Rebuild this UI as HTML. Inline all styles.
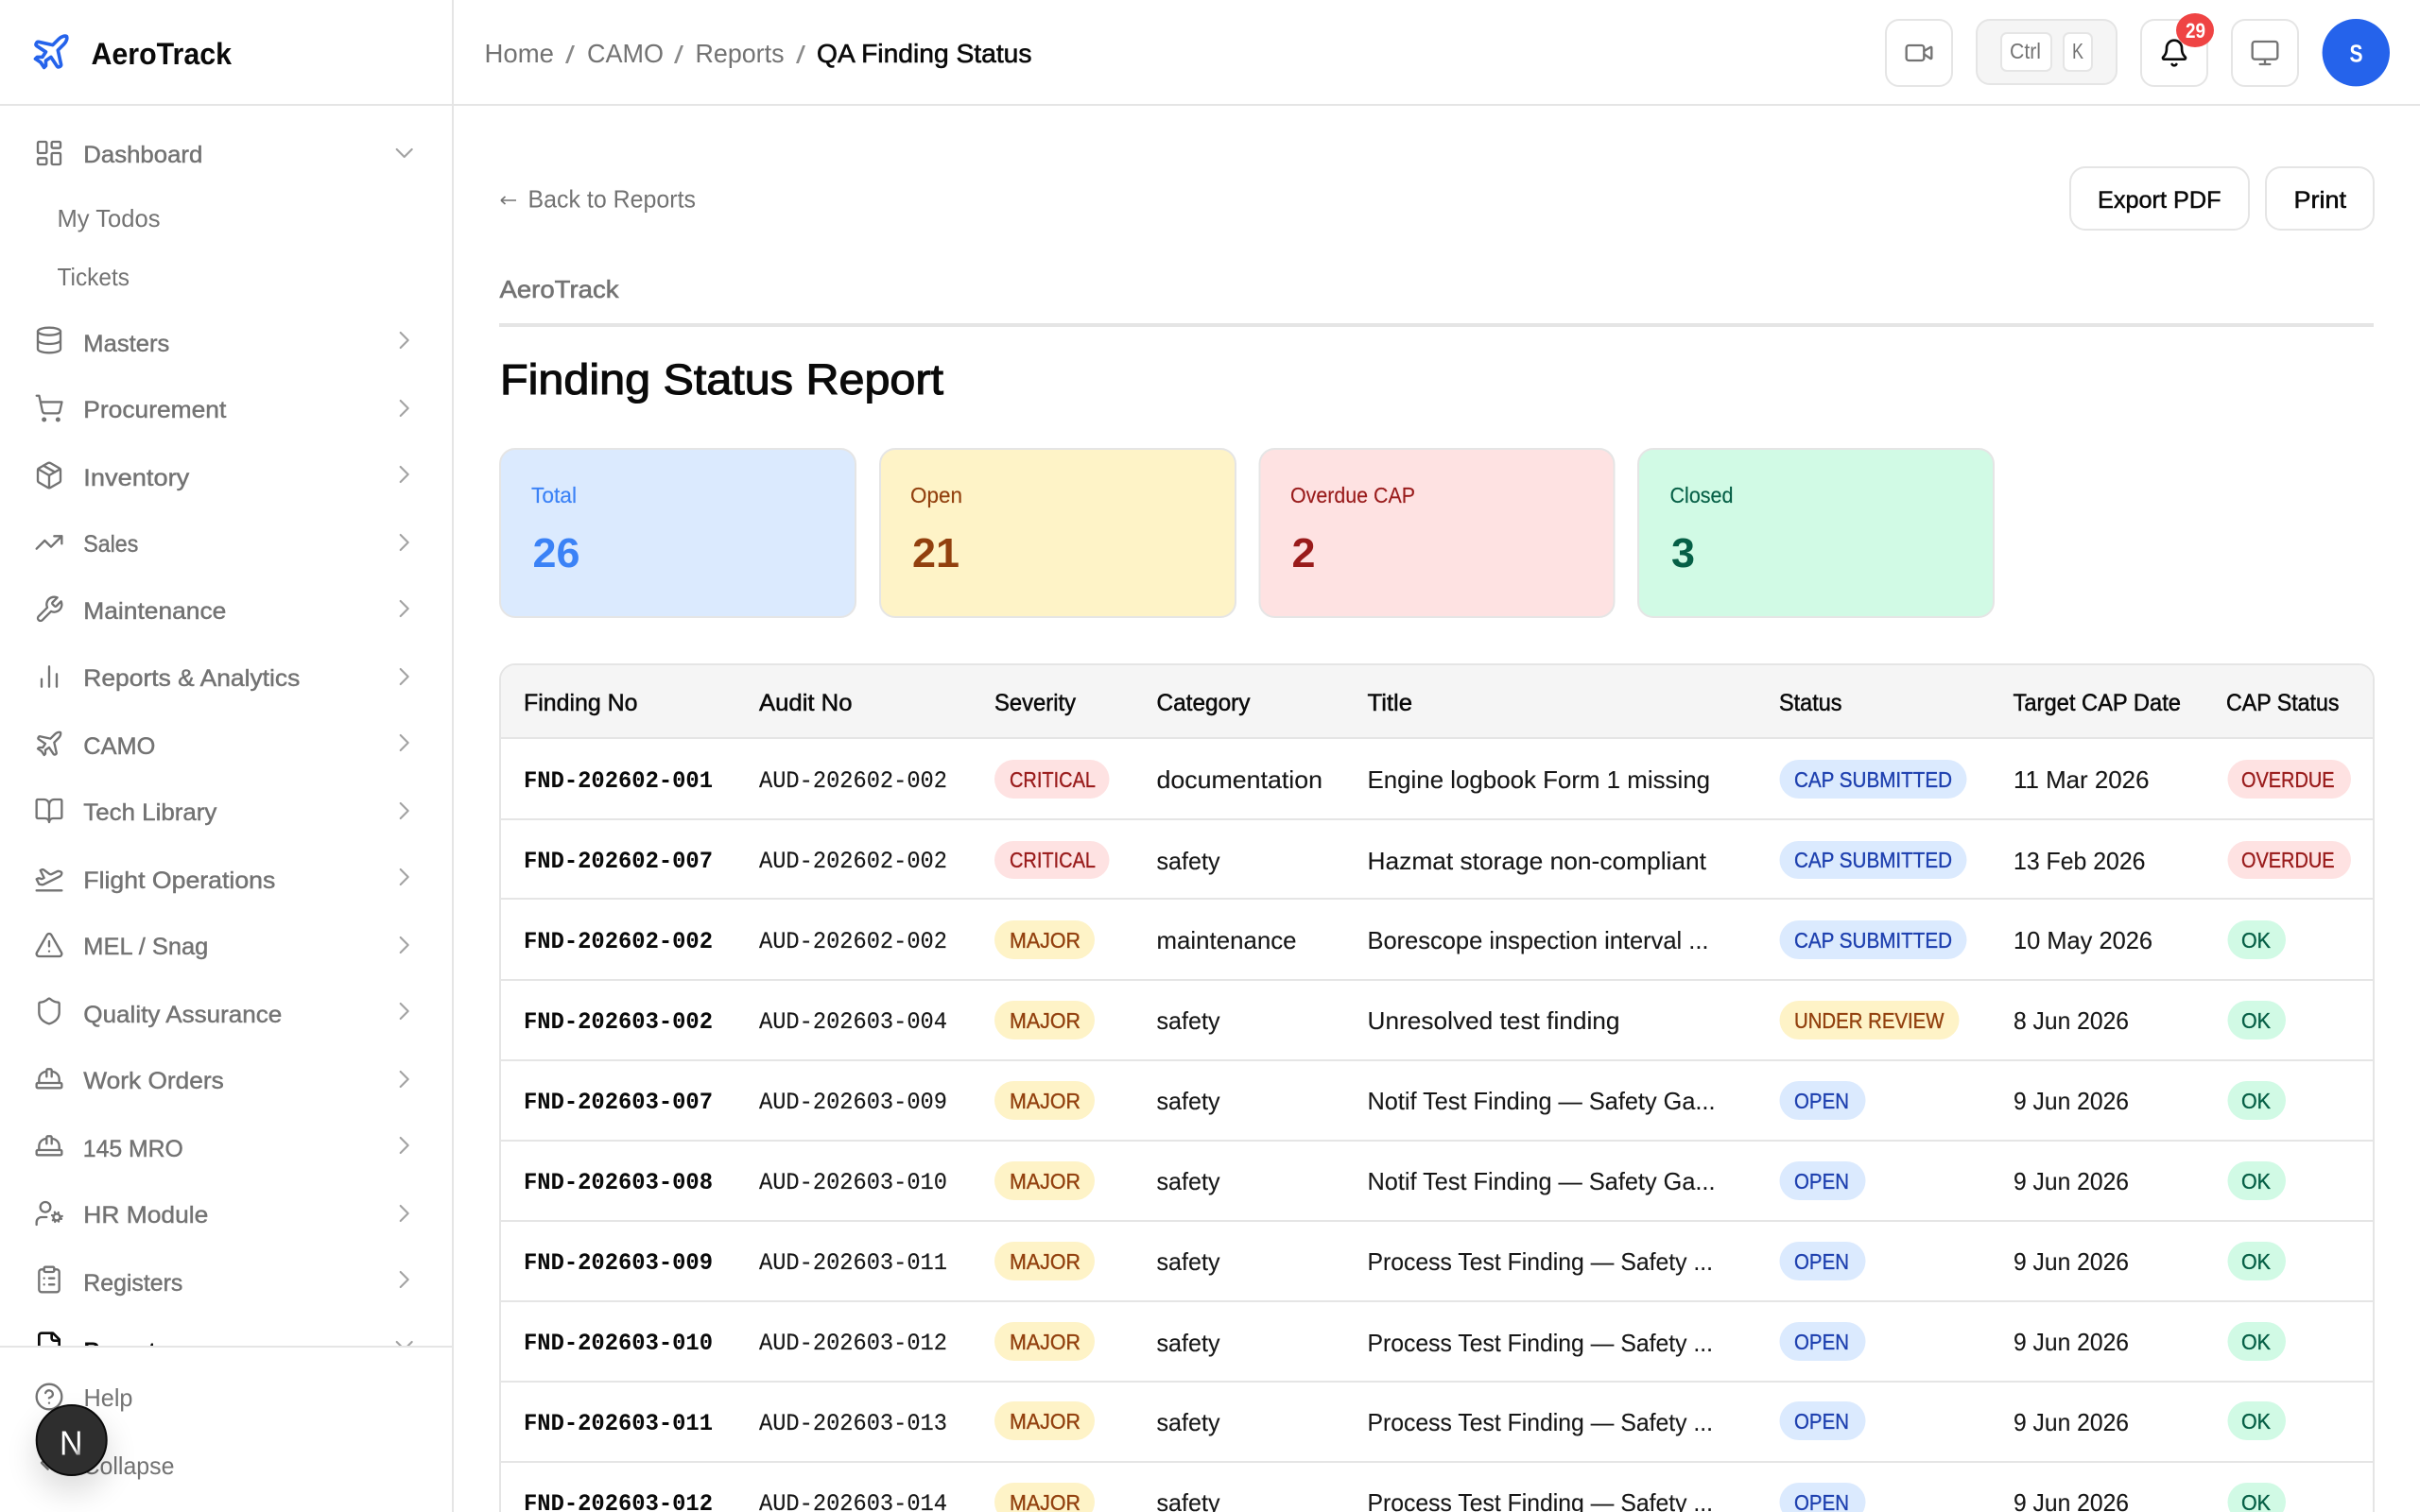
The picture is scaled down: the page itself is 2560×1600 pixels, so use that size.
<!DOCTYPE html>
<html lang="en"><head><meta charset="utf-8"><title>Finding Status Report - AeroTrack</title>
<style>
html,body{margin:0;padding:0;background:#fff;width:2560px;height:1600px;overflow:hidden}
svg{display:block}
text{font-family:"Liberation Sans",sans-serif;white-space:pre}
.n{font-size:25px;fill:#737373;stroke:#737373;stroke-width:.45;transform:translateX(-.7px)}
.s{font-size:26px;fill:#737373;transform:translateX(-.5px)}
.th{font-size:25px;fill:#0a0a0a;stroke:#0a0a0a;stroke-width:.5}
.td{font-size:26px;fill:#171717;stroke:#171717;stroke-width:.12}
.f{font-family:"Liberation Mono",monospace;font-size:25px;font-weight:700;fill:#0a0a0a;transform:translateY(-1px)}
.a{font-family:"Liberation Mono",monospace;font-size:25px;fill:#171717;stroke:#171717;stroke-width:.15;transform:translateY(-1px)}
.p{font-size:23px;stroke-width:.35}
.r{fill:#991b1b;stroke:#991b1b}.m{fill:#92400e;stroke:#92400e}.b{fill:#1e40af;stroke:#1e40af}.g{fill:#065f46;stroke:#065f46}
.ic{fill:none;stroke:#737373;stroke-width:1.75;stroke-linecap:round;stroke-linejoin:round}
.ch{fill:none;stroke:#a3a3a3;stroke-width:1.6;stroke-linecap:round;stroke-linejoin:round}
.bt{fill:#fff;stroke:#e5e5e5;stroke-width:2}
</style></head><body>
<svg xmlns="http://www.w3.org/2000/svg" width="2560" height="1600" viewBox="0 0 2560 1600">
<defs>
<path id="cr" d="m9 18 6-6-6-6"/>
<path id="cd" d="m6 9 6 6 6-6"/>
<g id="hat"><path d="M10 10V5a1 1 0 0 1 1-1h2a1 1 0 0 1 1 1v5"/><path d="M14 6a6 6 0 0 1 6 6v3"/><path d="M4 15v-3a6 6 0 0 1 6-6"/><rect x="2" y="15" width="20" height="4" rx="1"/></g>
<filter id="bl" x="-100%" y="-100%" width="300%" height="300%"><feGaussianBlur stdDeviation="16"/></filter>
<linearGradient id="ng" gradientUnits="userSpaceOnUse" x1="63" y1="1513" x2="88" y2="1540"><stop offset="0" stop-color="#fff"/><stop offset=".7" stop-color="#fff"/><stop offset="1" stop-color="#777"/></linearGradient>
</defs>
<rect width="2560" height="1600" fill="#fff"/>

<!-- sidebar -->
<g transform="translate(32,33) scale(1.83)" fill="none" stroke="#2563eb" stroke-width="2" stroke-linecap="round" stroke-linejoin="round"><path d="M17.8 19.2 16 11l3.5-3.5C21 6 21.5 4 21 3c-1-.5-3 0-4.5 1.5L13 8 4.8 6.2c-.5-.1-.9.1-1.1.5l-.3.5c-.2.5-.1 1 .3 1.3L9 12l-2 3H4l-1 1 3 2 2 3 1-1v-3l3-2 3.5 5.3c.3.4.8.5 1.3.3l.5-.2c.4-.3.6-.7.5-1.2z"/></g>
<text x="96.5" y="68" font-size="32" font-weight="700" fill="#0a0a0a" textLength="148.5" lengthAdjust="spacingAndGlyphs">AeroTrack</text>

<g transform="translate(36,146) scale(1.333)" class="ic"><rect x="3" y="3" width="7" height="9" rx="1"/><rect x="14" y="3" width="7" height="5" rx="1"/><rect x="14" y="12" width="7" height="9" rx="1"/><rect x="3" y="16" width="7" height="5" rx="1"/></g>
<text class="n" x="89" y="172" textLength="126" lengthAdjust="spacingAndGlyphs">Dashboard</text>
<use href="#cd" class="ch" transform="translate(411.7,146) scale(1.333)"/>
<text class="s" x="61" y="240" textLength="109" lengthAdjust="spacingAndGlyphs">My Todos</text>
<text class="s" x="61" y="302" textLength="76.5" lengthAdjust="spacingAndGlyphs">Tickets</text>

<g transform="translate(36,344) scale(1.333)" class="ic"><ellipse cx="12" cy="5" rx="9" ry="3"/><path d="M3 5V19A9 3 0 0 0 21 19V5"/><path d="M3 12A9 3 0 0 0 21 12"/></g>
<text class="n" x="89" y="372" textLength="91" lengthAdjust="spacingAndGlyphs">Masters</text>
<use href="#cr" class="ch" transform="translate(411.7,344) scale(1.333)"/>

<g transform="translate(36,416) scale(1.333)" class="ic"><circle cx="8" cy="21" r="1"/><circle cx="19" cy="21" r="1"/><path d="M2.05 2.05h2l2.66 12.42a2 2 0 0 0 2 1.58h9.78a2 2 0 0 0 1.95-1.57l1.65-7.43H5.12"/></g>
<text class="n" x="89" y="442" textLength="151" lengthAdjust="spacingAndGlyphs">Procurement</text>
<use href="#cr" class="ch" transform="translate(411.7,416) scale(1.333)"/>

<g transform="translate(36,487) scale(1.333)" class="ic"><path d="M11 21.73a2 2 0 0 0 2 0l7-4A2 2 0 0 0 21 16V8a2 2 0 0 0-1-1.73l-7-4a2 2 0 0 0-2 0l-7 4A2 2 0 0 0 3 8v8a2 2 0 0 0 1 1.73z"/><path d="M12 22V12"/><path d="M3.29 7 12 12 20.71 7"/><path d="m7.5 4.27 9 5.15"/></g>
<text class="n" x="89" y="514" textLength="112" lengthAdjust="spacingAndGlyphs">Inventory</text>
<use href="#cr" class="ch" transform="translate(411.7,486) scale(1.333)"/>

<g transform="translate(36,558) scale(1.333)" class="ic"><path d="M22 7 13.5 15.5 8.5 10.5 2 17"/><path d="M16 7h6v6"/></g>
<text class="n" x="89" y="584" textLength="58" lengthAdjust="spacingAndGlyphs">Sales</text>
<use href="#cr" class="ch" transform="translate(411.7,558) scale(1.333)"/>

<g transform="translate(36,629) scale(1.333)" class="ic"><path d="M14.7 6.3a1 1 0 0 0 0 1.4l1.6 1.6a1 1 0 0 0 1.4 0l3.77-3.77a6 6 0 0 1-7.94 7.94l-6.91 6.91a2.12 2.12 0 0 1-3-3l6.91-6.91a6 6 0 0 1 7.94-7.94l-3.76 3.76z"/></g>
<text class="n" x="89" y="655" textLength="151" lengthAdjust="spacingAndGlyphs">Maintenance</text>
<use href="#cr" class="ch" transform="translate(411.7,628) scale(1.333)"/>

<g transform="translate(36,700) scale(1.333)" class="ic"><path d="M18 20V10"/><path d="M12 20V4"/><path d="M6 20v-6"/></g>
<text class="n" x="89" y="726" textLength="229" lengthAdjust="spacingAndGlyphs">Reports &amp; Analytics</text>
<use href="#cr" class="ch" transform="translate(411.7,700) scale(1.333)"/>

<g transform="translate(36,771) scale(1.333)" class="ic"><path d="M17.8 19.2 16 11l3.5-3.5C21 6 21.5 4 21 3c-1-.5-3 0-4.5 1.5L13 8 4.8 6.2c-.5-.1-.9.1-1.1.5l-.3.5c-.2.5-.1 1 .3 1.3L9 12l-2 3H4l-1 1 3 2 2 3 1-1v-3l3-2 3.5 5.3c.3.4.8.5 1.3.3l.5-.2c.4-.3.6-.7.5-1.2z"/></g>
<text class="n" x="89" y="798" textLength="76" lengthAdjust="spacingAndGlyphs">CAMO</text>
<use href="#cr" class="ch" transform="translate(411.7,770) scale(1.333)"/>

<g transform="translate(36,842) scale(1.333)" class="ic"><path d="M12 7v14"/><path d="M3 18a1 1 0 0 1-1-1V4a1 1 0 0 1 1-1h5a4 4 0 0 1 4 4 4 4 0 0 1 4-4h5a1 1 0 0 1 1 1v13a1 1 0 0 1-1 1h-6a3 3 0 0 0-3 3 3 3 0 0 0-3-3z"/></g>
<text class="n" x="89" y="868" textLength="141" lengthAdjust="spacingAndGlyphs">Tech Library</text>
<use href="#cr" class="ch" transform="translate(411.7,842) scale(1.333)"/>

<g transform="translate(36,913) scale(1.333)" class="ic"><path d="M2 22h20"/><path d="M6.36 17.4 4 17l-2-4 1.1-.55a2 2 0 0 1 1.8 0l.17.1a2 2 0 0 0 1.8 0L8 12 5 6l.9-.45a2 2 0 0 1 2.09.2l4.02 3a2 2 0 0 0 2.1.2l4.19-2.06a2.41 2.41 0 0 1 1.73-.17L21 7a1.4 1.4 0 0 1 .87 1.99l-.38.76c-.23.46-.6.84-1.07 1.08L7.58 17.2a2 2 0 0 1-1.22.18Z"/></g>
<text class="n" x="89" y="940" textLength="203" lengthAdjust="spacingAndGlyphs">Flight Operations</text>
<use href="#cr" class="ch" transform="translate(411.7,912) scale(1.333)"/>

<g transform="translate(36,984) scale(1.333)" class="ic"><path d="m21.73 18-8-14a2 2 0 0 0-3.48 0l-8 14A2 2 0 0 0 4 21h16a2 2 0 0 0 1.73-3"/><path d="M12 9v4"/><path d="M12 17h.01"/></g>
<text class="n" x="89" y="1010" textLength="132" lengthAdjust="spacingAndGlyphs">MEL / Snag</text>
<use href="#cr" class="ch" transform="translate(411.7,984) scale(1.333)"/>

<g transform="translate(36,1054) scale(1.333)" class="ic"><path d="M20 13c0 5-3.5 7.5-7.66 8.95a1 1 0 0 1-.67-.01C7.5 20.5 4 18 4 13V6a1 1 0 0 1 1-1c2 0 4.5-1.2 6.24-2.72a1.17 1.17 0 0 1 1.52 0C14.51 3.81 17 5 19 5a1 1 0 0 1 1 1z"/></g>
<text class="n" x="89" y="1082" textLength="210" lengthAdjust="spacingAndGlyphs">Quality Assurance</text>
<use href="#cr" class="ch" transform="translate(411.7,1054) scale(1.333)"/>

<use href="#hat" class="ic" transform="translate(36,1126) scale(1.333)"/>
<text class="n" x="89" y="1152" textLength="148.5" lengthAdjust="spacingAndGlyphs">Work Orders</text>
<use href="#cr" class="ch" transform="translate(411.7,1126) scale(1.333)"/>

<use href="#hat" class="ic" transform="translate(36,1197) scale(1.333)"/>
<text class="n" x="88.5" y="1224" textLength="106" lengthAdjust="spacingAndGlyphs">145 MRO</text>
<use href="#cr" class="ch" transform="translate(411.7,1196) scale(1.333)"/>

<g transform="translate(36,1268) scale(1.333)" class="ic"><circle cx="18" cy="15" r="2.6"/><circle cx="9" cy="7" r="4"/><path d="M10 15H6a4 4 0 0 0-4 4v2"/><path d="m21.7 16.4-.9-.3m-5.6-2.2-.9-.3m2.3 5.1.3-.9m2.2-5.6.3-.9m.2 7.1-.4-1m-2.4-5.4-.4-1m-1.5 6.4 1-.4m5.4-2.4 1-.4"/></g>
<text class="n" x="89" y="1294" textLength="132" lengthAdjust="spacingAndGlyphs">HR Module</text>
<use href="#cr" class="ch" transform="translate(411.7,1268) scale(1.333)"/>

<g transform="translate(36,1338) scale(1.333)" class="ic"><rect x="8" y="2" width="8" height="4" rx="1"/><path d="M16 4h2a2 2 0 0 1 2 2v14a2 2 0 0 1-2 2H6a2 2 0 0 1-2-2V6a2 2 0 0 1 2-2h2"/><path d="M12 11h4"/><path d="M12 16h4"/><path d="M8 11h.01"/><path d="M8 16h.01"/></g>
<text class="n" x="89" y="1366" textLength="105" lengthAdjust="spacingAndGlyphs">Registers</text>
<use href="#cr" class="ch" transform="translate(411.7,1338) scale(1.333)"/>

<g transform="translate(36,1408) scale(1.333)" fill="none" stroke="#0a0a0a" stroke-width="2" stroke-linecap="round" stroke-linejoin="round"><path d="M15 2H6a2 2 0 0 0-2 2v16a2 2 0 0 0 2 2h12a2 2 0 0 0 2-2V7Z"/><path d="M14 2v4a2 2 0 0 0 2 2h4"/></g>
<text x="88.5" y="1438" font-size="25" font-weight="700" fill="#0a0a0a" textLength="89.5" lengthAdjust="spacingAndGlyphs">Reports</text>
<use href="#cd" class="ch" transform="translate(411.7,1408) scale(1.333)"/>
<rect x="0" y="1425" width="478" height="175" fill="#fff"/>
<rect x="0" y="1424" width="478" height="2" fill="#e5e5e5"/>

<g transform="translate(36,1462) scale(1.333)" class="ic"><circle cx="12" cy="12" r="10"/><path d="M9.09 9a3 3 0 0 1 5.83 1c0 2-3 3-3 3"/><path d="M12 17h.01"/></g>
<text class="s" x="89" y="1488" textLength="52" lengthAdjust="spacingAndGlyphs">Help</text>
<g transform="translate(36,1532) scale(1.333)" class="ic"><path d="m11 17-5-5 5-5"/><path d="m18 17-5-5 5-5"/></g>
<text class="s" x="88" y="1560" textLength="97" lengthAdjust="spacingAndGlyphs">Collapse</text>

<rect x="478" y="0" width="2" height="1600" fill="#e5e5e5"/>
<rect x="0" y="110" width="2560" height="2" fill="#e5e5e5"/>

<!-- dev indicator -->
<circle cx="76" cy="1540" r="40" fill="#000" opacity=".13" filter="url(#bl)"/>
<circle cx="75.7" cy="1524" r="37" fill="#2e2e2e" stroke="#0a0a0a" stroke-width="2"/>
<text x="63" y="1539.5" font-size="36" fill="url(#ng)" textLength="24.5" lengthAdjust="spacingAndGlyphs">N</text>

<!-- header -->
<text x="512.5" y="66" font-size="28" fill="#737373" textLength="73.5" lengthAdjust="spacingAndGlyphs">Home</text>
<text x="598" y="67" font-size="26" fill="#8a8a8a" textLength="10" lengthAdjust="spacingAndGlyphs">/</text>
<text x="621" y="66" font-size="28" fill="#737373" textLength="81" lengthAdjust="spacingAndGlyphs">CAMO</text>
<text x="713" y="67" font-size="26" fill="#8a8a8a" textLength="10" lengthAdjust="spacingAndGlyphs">/</text>
<text x="735.5" y="66" font-size="28" fill="#737373" textLength="94" lengthAdjust="spacingAndGlyphs">Reports</text>
<text x="842" y="67" font-size="26" fill="#8a8a8a" textLength="10" lengthAdjust="spacingAndGlyphs">/</text>
<text x="864" y="66" font-size="28" fill="#0a0a0a" stroke="#0a0a0a" stroke-width=".6" textLength="227.5" lengthAdjust="spacingAndGlyphs">QA Finding Status</text>

<rect class="bt" x="1995" y="21" width="70" height="70" rx="14"/>
<g transform="translate(2014,40) scale(1.333)" class="ic"><path d="m16 13 5.223 3.482a.5.5 0 0 0 .777-.416V7.87a.5.5 0 0 0-.752-.432L16 10.5"/><rect x="2" y="6" width="14" height="12" rx="2"/></g>

<rect x="2091" y="21" width="148" height="68" rx="14" fill="#f5f5f5" stroke="#e5e5e5" stroke-width="2"/>
<rect class="bt" x="2117" y="35" width="53" height="40" rx="6"/>
<text x="2126" y="62" font-size="23" fill="#737373" textLength="33" lengthAdjust="spacingAndGlyphs">Ctrl</text>
<rect class="bt" x="2183" y="35" width="30" height="40" rx="6"/>
<text x="2192" y="62" font-size="23" fill="#737373" textLength="12" lengthAdjust="spacingAndGlyphs">K</text>

<rect class="bt" x="2265" y="21" width="70" height="70" rx="14"/>
<g transform="translate(2284,40) scale(1.333)" fill="none" stroke="#0a0a0a" stroke-width="2" stroke-linecap="round" stroke-linejoin="round"><path d="M10.268 21a2 2 0 0 0 3.464 0"/><path d="M3.262 15.326A1 1 0 0 0 4 17h16a1 1 0 0 0 .74-1.673C19.41 13.956 18 12.499 18 8A6 6 0 0 0 6 8c0 4.499-1.411 5.956-2.738 7.326"/></g>
<ellipse cx="2322" cy="32" rx="20" ry="18" fill="#ef4444"/>
<text x="2312" y="40" font-size="22" font-weight="700" fill="#fff" textLength="21" lengthAdjust="spacingAndGlyphs">29</text>

<rect class="bt" x="2361" y="21" width="70" height="70" rx="14"/>
<g transform="translate(2380,40) scale(1.333)" class="ic"><rect x="2" y="3" width="20" height="14" rx="2"/><path d="M8 21h8"/><path d="M12 17v4"/></g>

<circle cx="2492.3" cy="55.7" r="35.7" fill="#2563eb"/>
<text x="2485.5" y="65.5" font-size="26" font-weight="700" fill="#fff" textLength="14" lengthAdjust="spacingAndGlyphs">S</text>

<!-- toolbar -->
<path d="M530 212h16M530 212l4.500-4M530 212l4.500 4" fill="none" stroke="#737373" stroke-width="1.6"/>
<text x="558.5" y="219.5" font-size="26" fill="#737373" textLength="177.5" lengthAdjust="spacingAndGlyphs">Back to Reports</text>
<rect class="bt" x="2190" y="177" width="189" height="66" rx="16"/>
<text class="th" x="2219" y="220" textLength="130.5" lengthAdjust="spacingAndGlyphs">Export PDF</text>
<rect class="bt" x="2397" y="177" width="114" height="66" rx="16"/>
<text class="th" x="2426.5" y="220" textLength="55.5" lengthAdjust="spacingAndGlyphs">Print</text>

<text x="528.5" y="315" font-size="26" fill="#737373" stroke="#737373" stroke-width=".6" textLength="126" lengthAdjust="spacingAndGlyphs">AeroTrack</text>
<rect x="528" y="342" width="1983" height="4" fill="#e5e5e5"/>
<text x="529" y="417" font-size="45" fill="#0a0a0a" stroke="#0a0a0a" stroke-width="1.1" textLength="469" lengthAdjust="spacingAndGlyphs">Finding Status Report</text>

<!-- summary cards -->
<rect x="529" y="475" width="376" height="178" rx="16" fill="#dbeafe" stroke="#e5e5e5" stroke-width="2"/>
<text x="562" y="532" font-size="23" fill="#3b82f6" stroke="#3b82f6" stroke-width=".15" textLength="48" lengthAdjust="spacingAndGlyphs">Total</text>
<text x="563.5" y="600" font-size="44" font-weight="700" fill="#3b82f6" textLength="50" lengthAdjust="spacingAndGlyphs">26</text>
<rect x="931" y="475" width="376" height="178" rx="16" fill="#fef3c7" stroke="#e5e5e5" stroke-width="2"/>
<text x="963" y="532" font-size="23" fill="#92400e" stroke="#92400e" stroke-width=".15" textLength="55" lengthAdjust="spacingAndGlyphs">Open</text>
<text x="965" y="600" font-size="44" font-weight="700" fill="#92400e" textLength="50" lengthAdjust="spacingAndGlyphs">21</text>
<rect x="1332.5" y="475" width="375" height="178" rx="16" fill="#fee2e2" stroke="#e5e5e5" stroke-width="2"/>
<text x="1365" y="532" font-size="23" fill="#991b1b" stroke="#991b1b" stroke-width=".15" textLength="132" lengthAdjust="spacingAndGlyphs">Overdue CAP</text>
<text x="1366.5" y="600" font-size="44" font-weight="700" fill="#991b1b" textLength="25" lengthAdjust="spacingAndGlyphs">2</text>
<rect x="1733" y="475" width="376" height="178" rx="16" fill="#d1fae5" stroke="#e5e5e5" stroke-width="2"/>
<text x="1766.5" y="532" font-size="23" fill="#065f46" stroke="#065f46" stroke-width=".15" textLength="67" lengthAdjust="spacingAndGlyphs">Closed</text>
<text x="1768" y="600" font-size="44" font-weight="700" fill="#065f46" textLength="25" lengthAdjust="spacingAndGlyphs">3</text>

<!-- table frame -->
<path d="M529 1602V719a16 16 0 0 1 16-16H2495a16 16 0 0 1 16 16V1602" fill="#fff" stroke="#e5e5e5" stroke-width="2"/>
<path d="M530 780V719a15 15 0 0 1 15-15H2495a15 15 0 0 1 15 15V780Z" fill="#f5f5f5"/>
<g fill="#e5e5e5"><rect x="530" y="780" width="1980" height="2"/><rect x="530" y="866" width="1980" height="2"/><rect x="530" y="950" width="1980" height="2"/><rect x="530" y="1036" width="1980" height="2"/><rect x="530" y="1121" width="1980" height="2"/><rect x="530" y="1206" width="1980" height="2"/><rect x="530" y="1291" width="1980" height="2"/><rect x="530" y="1376" width="1980" height="2"/><rect x="530" y="1461" width="1980" height="2"/><rect x="530" y="1546" width="1980" height="2"/></g>

<text class="th" x="554" y="752" textLength="120.5" lengthAdjust="spacingAndGlyphs">Finding No</text>
<text class="th" x="803" y="752" textLength="98.5" lengthAdjust="spacingAndGlyphs">Audit No</text>
<text class="th" x="1052" y="752" textLength="86" lengthAdjust="spacingAndGlyphs">Severity</text>
<text class="th" x="1223.5" y="752" textLength="99" lengthAdjust="spacingAndGlyphs">Category</text>
<text class="th" x="1446.5" y="752" textLength="47.5" lengthAdjust="spacingAndGlyphs">Title</text>
<text class="th" x="1882" y="752" textLength="66.5" lengthAdjust="spacingAndGlyphs">Status</text>
<text class="th" x="2129.5" y="752" textLength="177.5" lengthAdjust="spacingAndGlyphs">Target CAP Date</text>
<text class="th" x="2355" y="752" textLength="119.5" lengthAdjust="spacingAndGlyphs">CAP Status</text>

<!-- row 1 -->
<text class="f" x="554" y="834" textLength="200" lengthAdjust="spacingAndGlyphs">FND-202602-001</text>
<text class="a" x="803" y="834" textLength="199" lengthAdjust="spacingAndGlyphs">AUD-202602-002</text>
<rect x="1052" y="804" width="121.5" height="41" rx="20.5" fill="#fee2e2"/><text class="p r" x="1068" y="833" textLength="91" lengthAdjust="spacingAndGlyphs">CRITICAL</text>
<text class="td" x="1223.5" y="834" textLength="175.5" lengthAdjust="spacingAndGlyphs">documentation</text>
<text class="td" x="1446.5" y="834" textLength="362.5" lengthAdjust="spacingAndGlyphs">Engine logbook Form 1 missing</text>
<rect x="1882.5" y="804" width="198" height="41" rx="20.5" fill="#dbeafe"/><text class="p b" x="1898" y="833" textLength="167" lengthAdjust="spacingAndGlyphs">CAP SUBMITTED</text>
<text class="td" x="2130" y="834" textLength="143.5" lengthAdjust="spacingAndGlyphs">11 Mar 2026</text>
<rect x="2356.5" y="804" width="130.5" height="41" rx="20.5" fill="#fee2e2"/><text class="p r" x="2371" y="833" textLength="98.5" lengthAdjust="spacingAndGlyphs">OVERDUE</text>

<!-- row 2 -->
<text class="f" x="554" y="919" textLength="200" lengthAdjust="spacingAndGlyphs">FND-202602-007</text>
<text class="a" x="803" y="919" textLength="199" lengthAdjust="spacingAndGlyphs">AUD-202602-002</text>
<rect x="1052" y="890" width="121.5" height="40" rx="20" fill="#fee2e2"/><text class="p r" x="1068" y="918" textLength="91" lengthAdjust="spacingAndGlyphs">CRITICAL</text>
<text class="td" x="1223.5" y="920" textLength="67" lengthAdjust="spacingAndGlyphs">safety</text>
<text class="td" x="1446.5" y="920" textLength="358.5" lengthAdjust="spacingAndGlyphs">Hazmat storage non-compliant</text>
<rect x="1882.5" y="890" width="198" height="40" rx="20" fill="#dbeafe"/><text class="p b" x="1898" y="918" textLength="167" lengthAdjust="spacingAndGlyphs">CAP SUBMITTED</text>
<text class="td" x="2130" y="920" textLength="139.5" lengthAdjust="spacingAndGlyphs">13 Feb 2026</text>
<rect x="2356.5" y="890" width="130.5" height="40" rx="20" fill="#fee2e2"/><text class="p r" x="2371" y="918" textLength="98.5" lengthAdjust="spacingAndGlyphs">OVERDUE</text>

<!-- row 3 -->
<text class="f" x="554" y="1004" textLength="200" lengthAdjust="spacingAndGlyphs">FND-202602-002</text>
<text class="a" x="803" y="1004" textLength="199" lengthAdjust="spacingAndGlyphs">AUD-202602-002</text>
<rect x="1052" y="974" width="106" height="41" rx="20.5" fill="#fef3c7"/><text class="p m" x="1068" y="1003" textLength="75" lengthAdjust="spacingAndGlyphs">MAJOR</text>
<text class="td" x="1223.5" y="1004" textLength="148" lengthAdjust="spacingAndGlyphs">maintenance</text>
<text class="td" x="1446.5" y="1004" textLength="361" lengthAdjust="spacingAndGlyphs">Borescope inspection interval ...</text>
<rect x="1882.5" y="974" width="198" height="41" rx="20.5" fill="#dbeafe"/><text class="p b" x="1898" y="1003" textLength="167" lengthAdjust="spacingAndGlyphs">CAP SUBMITTED</text>
<text class="td" x="2130" y="1004" textLength="147" lengthAdjust="spacingAndGlyphs">10 May 2026</text>
<rect x="2356.5" y="974" width="61.5" height="41" rx="20.5" fill="#d1fae5"/><text class="p g" x="2371" y="1003" textLength="31" lengthAdjust="spacingAndGlyphs">OK</text>

<!-- row 4 -->
<text class="f" x="554" y="1089" textLength="200" lengthAdjust="spacingAndGlyphs">FND-202603-002</text>
<text class="a" x="803" y="1089" textLength="199" lengthAdjust="spacingAndGlyphs">AUD-202603-004</text>
<rect x="1052" y="1059" width="106" height="41" rx="20.5" fill="#fef3c7"/><text class="p m" x="1068" y="1088" textLength="75" lengthAdjust="spacingAndGlyphs">MAJOR</text>
<text class="td" x="1223.5" y="1089" textLength="67" lengthAdjust="spacingAndGlyphs">safety</text>
<text class="td" x="1446.5" y="1089" textLength="267" lengthAdjust="spacingAndGlyphs">Unresolved test finding</text>
<rect x="1882.5" y="1059" width="190" height="41" rx="20.5" fill="#fef3c7"/><text class="p m" x="1898" y="1088" textLength="158.5" lengthAdjust="spacingAndGlyphs">UNDER REVIEW</text>
<text class="td" x="2130" y="1089" textLength="122" lengthAdjust="spacingAndGlyphs">8 Jun 2026</text>
<rect x="2356.5" y="1059" width="61.5" height="41" rx="20.5" fill="#d1fae5"/><text class="p g" x="2371" y="1088" textLength="31" lengthAdjust="spacingAndGlyphs">OK</text>

<!-- row 5 -->
<text class="f" x="554" y="1174" textLength="200" lengthAdjust="spacingAndGlyphs">FND-202603-007</text>
<text class="a" x="803" y="1174" textLength="199" lengthAdjust="spacingAndGlyphs">AUD-202603-009</text>
<rect x="1052" y="1144" width="106" height="41" rx="20.5" fill="#fef3c7"/><text class="p m" x="1068" y="1173" textLength="75" lengthAdjust="spacingAndGlyphs">MAJOR</text>
<text class="td" x="1223.5" y="1174" textLength="67" lengthAdjust="spacingAndGlyphs">safety</text>
<text class="td" x="1446.5" y="1174" textLength="368" lengthAdjust="spacingAndGlyphs">Notif Test Finding — Safety Ga...</text>
<rect x="1882.5" y="1144" width="91" height="41" rx="20.5" fill="#dbeafe"/><text class="p b" x="1898" y="1173" textLength="58" lengthAdjust="spacingAndGlyphs">OPEN</text>
<text class="td" x="2130" y="1174" textLength="122" lengthAdjust="spacingAndGlyphs">9 Jun 2026</text>
<rect x="2356.5" y="1144" width="61.5" height="41" rx="20.5" fill="#d1fae5"/><text class="p g" x="2371" y="1173" textLength="31" lengthAdjust="spacingAndGlyphs">OK</text>

<!-- row 6 -->
<text class="f" x="554" y="1259" textLength="200" lengthAdjust="spacingAndGlyphs">FND-202603-008</text>
<text class="a" x="803" y="1259" textLength="199" lengthAdjust="spacingAndGlyphs">AUD-202603-010</text>
<rect x="1052" y="1229" width="106" height="41" rx="20.5" fill="#fef3c7"/><text class="p m" x="1068" y="1258" textLength="75" lengthAdjust="spacingAndGlyphs">MAJOR</text>
<text class="td" x="1223.5" y="1259" textLength="67" lengthAdjust="spacingAndGlyphs">safety</text>
<text class="td" x="1446.5" y="1259" textLength="368" lengthAdjust="spacingAndGlyphs">Notif Test Finding — Safety Ga...</text>
<rect x="1882.5" y="1229" width="91" height="41" rx="20.5" fill="#dbeafe"/><text class="p b" x="1898" y="1258" textLength="58" lengthAdjust="spacingAndGlyphs">OPEN</text>
<text class="td" x="2130" y="1259" textLength="122" lengthAdjust="spacingAndGlyphs">9 Jun 2026</text>
<rect x="2356.5" y="1229" width="61.5" height="41" rx="20.5" fill="#d1fae5"/><text class="p g" x="2371" y="1258" textLength="31" lengthAdjust="spacingAndGlyphs">OK</text>

<!-- row 7 -->
<text class="f" x="554" y="1344" textLength="200" lengthAdjust="spacingAndGlyphs">FND-202603-009</text>
<text class="a" x="803" y="1344" textLength="199" lengthAdjust="spacingAndGlyphs">AUD-202603-011</text>
<rect x="1052" y="1314" width="106" height="41" rx="20.5" fill="#fef3c7"/><text class="p m" x="1068" y="1343" textLength="75" lengthAdjust="spacingAndGlyphs">MAJOR</text>
<text class="td" x="1223.5" y="1344" textLength="67" lengthAdjust="spacingAndGlyphs">safety</text>
<text class="td" x="1446.5" y="1344" textLength="365.5" lengthAdjust="spacingAndGlyphs">Process Test Finding — Safety ...</text>
<rect x="1882.5" y="1314" width="91" height="41" rx="20.5" fill="#dbeafe"/><text class="p b" x="1898" y="1343" textLength="58" lengthAdjust="spacingAndGlyphs">OPEN</text>
<text class="td" x="2130" y="1344" textLength="122" lengthAdjust="spacingAndGlyphs">9 Jun 2026</text>
<rect x="2356.5" y="1314" width="61.5" height="41" rx="20.5" fill="#d1fae5"/><text class="p g" x="2371" y="1343" textLength="31" lengthAdjust="spacingAndGlyphs">OK</text>

<!-- row 8 -->
<text class="f" x="554" y="1429" textLength="200" lengthAdjust="spacingAndGlyphs">FND-202603-010</text>
<text class="a" x="803" y="1429" textLength="199" lengthAdjust="spacingAndGlyphs">AUD-202603-012</text>
<rect x="1052" y="1399" width="106" height="41" rx="20.5" fill="#fef3c7"/><text class="p m" x="1068" y="1428" textLength="75" lengthAdjust="spacingAndGlyphs">MAJOR</text>
<text class="td" x="1223.5" y="1430" textLength="67" lengthAdjust="spacingAndGlyphs">safety</text>
<text class="td" x="1446.5" y="1430" textLength="365.5" lengthAdjust="spacingAndGlyphs">Process Test Finding — Safety ...</text>
<rect x="1882.5" y="1399" width="91" height="41" rx="20.5" fill="#dbeafe"/><text class="p b" x="1898" y="1428" textLength="58" lengthAdjust="spacingAndGlyphs">OPEN</text>
<text class="td" x="2130" y="1429" textLength="122" lengthAdjust="spacingAndGlyphs">9 Jun 2026</text>
<rect x="2356.5" y="1399" width="61.5" height="41" rx="20.5" fill="#d1fae5"/><text class="p g" x="2371" y="1428" textLength="31" lengthAdjust="spacingAndGlyphs">OK</text>

<!-- row 9 -->
<text class="f" x="554" y="1514" textLength="200" lengthAdjust="spacingAndGlyphs">FND-202603-011</text>
<text class="a" x="803" y="1514" textLength="199" lengthAdjust="spacingAndGlyphs">AUD-202603-013</text>
<rect x="1052" y="1483" width="106" height="41" rx="20.5" fill="#fef3c7"/><text class="p m" x="1068" y="1512" textLength="75" lengthAdjust="spacingAndGlyphs">MAJOR</text>
<text class="td" x="1223.5" y="1514" textLength="67" lengthAdjust="spacingAndGlyphs">safety</text>
<text class="td" x="1446.5" y="1514" textLength="365.5" lengthAdjust="spacingAndGlyphs">Process Test Finding — Safety ...</text>
<rect x="1882.5" y="1483" width="91" height="41" rx="20.5" fill="#dbeafe"/><text class="p b" x="1898" y="1512" textLength="58" lengthAdjust="spacingAndGlyphs">OPEN</text>
<text class="td" x="2130" y="1514" textLength="122" lengthAdjust="spacingAndGlyphs">9 Jun 2026</text>
<rect x="2356.5" y="1483" width="61.5" height="41" rx="20.5" fill="#d1fae5"/><text class="p g" x="2371" y="1512" textLength="31" lengthAdjust="spacingAndGlyphs">OK</text>

<!-- row 10 -->
<text class="f" x="554" y="1599" textLength="200" lengthAdjust="spacingAndGlyphs">FND-202603-012</text>
<text class="a" x="803" y="1599" textLength="199" lengthAdjust="spacingAndGlyphs">AUD-202603-014</text>
<rect x="1052" y="1569" width="106" height="41" rx="20.5" fill="#fef3c7"/><text class="p m" x="1068" y="1598" textLength="75" lengthAdjust="spacingAndGlyphs">MAJOR</text>
<text class="td" x="1223.5" y="1599" textLength="67" lengthAdjust="spacingAndGlyphs">safety</text>
<text class="td" x="1446.5" y="1599" textLength="365.5" lengthAdjust="spacingAndGlyphs">Process Test Finding — Safety ...</text>
<rect x="1882.5" y="1569" width="91" height="41" rx="20.5" fill="#dbeafe"/><text class="p b" x="1898" y="1598" textLength="58" lengthAdjust="spacingAndGlyphs">OPEN</text>
<text class="td" x="2130" y="1599" textLength="122" lengthAdjust="spacingAndGlyphs">9 Jun 2026</text>
<rect x="2356.5" y="1569" width="61.5" height="41" rx="20.5" fill="#d1fae5"/><text class="p g" x="2371" y="1598" textLength="31" lengthAdjust="spacingAndGlyphs">OK</text>
</svg>
</body></html>
